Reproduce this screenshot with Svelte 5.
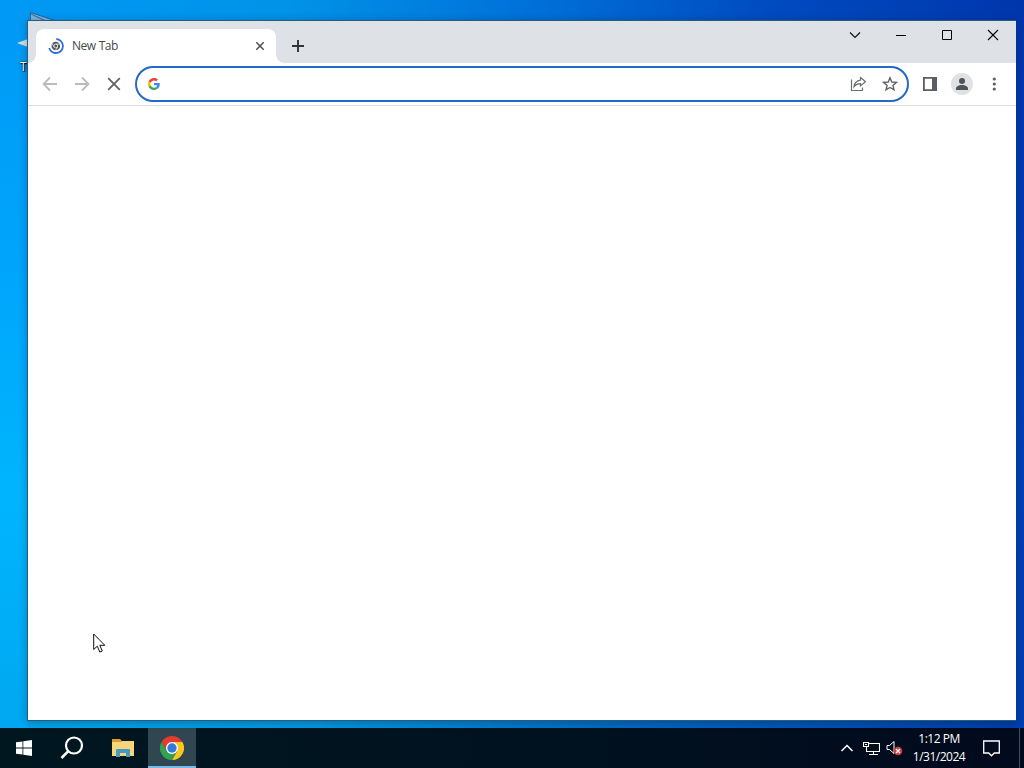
<script lang="ts">
  let tabTitle = $state('New Tab')
  let address = $state('')
  const time = '1:12 PM'
  const date = '1/31/2024'
</script>

<div class="desktop">
  <div class="shortcut" aria-hidden="true">
    <svg width="40" height="44" viewBox="0 0 40 44">
      <path d="M13 14V1.500l25 8.500H14" fill="#79b5e2" />
      <path d="M13.500 14V1.500L38 9.500M14 3l15 7" fill="none" stroke="#2c608c" stroke-width=".9" />
      <path d="M0 32l11-4v8z" fill="#d5dde2" />
    </svg>
    <span>Th</span>
  </div>

  <main class="window">
    <header class="titlebar">
      <div class="tab">
        <svg class="favicon" width="16" height="16" viewBox="0 0 16 16">
          <circle cx="7.8" cy="8" r="4.300" fill="#51555a" />
          <circle cx="7.8" cy="8" r="1.900" fill="#51555a" stroke="#fff" stroke-width=".8" />
          <path d="M7.8 6.100h4M6.100 9L4.200 5.700M9.500 9l-2 3.400" stroke="#fff" stroke-width=".7" />
          <path d="M8.300 1A7 7 0 1 1 1.200 10" fill="none" stroke="#2f6fdc" stroke-width="1.800" />
        </svg>
        <span class="tab-title">{tabTitle}</span>
        <button class="tab-close" aria-label="Close tab">
          <svg width="10" height="10" viewBox="0 0 10 10"><path d="M1.300 1.300l7.400 7.400M8.700 1.300L1.300 8.700" stroke="#4a4d51" stroke-width="1.500" /></svg>
        </button>
      </div>
      <button class="new-tab" aria-label="New tab">
        <svg width="12" height="12" viewBox="0 0 12 12"><path d="M6 0v12M0 6h12" stroke="#303337" stroke-width="1.900" /></svg>
      </button>
      <div class="controls">
        <button aria-label="Search tabs"><svg width="12" height="12" viewBox="0 0 12 12"><path d="M1 3.500l5 5 5-5" fill="none" stroke="#111" stroke-width="1.200" /></svg></button>
        <button aria-label="Minimize"><svg width="12" height="12" viewBox="0 0 12 12"><path d="M1 6.500h10" stroke="#000" /></svg></button>
        <button aria-label="Maximize"><svg width="12" height="12" viewBox="0 0 12 12"><path d="M1.500 1.500h9v9h-9z" fill="none" stroke="#000" /></svg></button>
        <button aria-label="Close"><svg width="12" height="12" viewBox="0 0 12 12"><path d="M1 1l10 10M11 1L1 11" stroke="#000" stroke-width="1.100" /></svg></button>
      </div>
    </header>

    <nav class="toolbar">
      <button aria-label="Back"><svg width="16" height="16" viewBox="0 0 16 16"><path d="M15 8H2M8 1.500L1.500 8 8 14.500" fill="none" stroke="#b9bbbe" stroke-width="1.800" /></svg></button>
      <button aria-label="Forward"><svg width="16" height="16" viewBox="0 0 16 16"><path d="M1 8h13M8 1.500L14.500 8 8 14.500" fill="none" stroke="#b9bbbe" stroke-width="1.800" /></svg></button>
      <button aria-label="Stop"><svg width="16" height="16" viewBox="0 0 16 16"><path d="M2.200 2.200l11.600 11.600M13.800 2.200L2.200 13.800" stroke="#5f6266" stroke-width="1.800" /></svg></button>
      <div class="omnibox">
        <svg width="12" height="12" viewBox="0 0 48 48">
          <path fill="#ea4335" d="M24 9.500c3.500 0 6.700 1.200 9.200 3.600l6.900-6.900C35.900 2.400 30.500 0 24 0 14.600 0 6.500 5.400 2.600 13.200l8 6.200C12.400 13.700 17.700 9.500 24 9.500z" />
          <path fill="#4285f4" d="M47 24.600c0-1.600-.2-3.100-.4-4.600H24v9h12.900c-.6 3-2.300 5.500-4.800 7.200l7.700 6C44.400 38 47 32 47 24.600z" />
          <path fill="#fbbc05" d="M10.500 28.600A14.500 14.500 0 0 1 10.500 19.400l-8-6.200a24 24 0 0 0 0 21.600z" />
          <path fill="#34a853" d="M24 48c6.500 0 11.900-2.100 15.900-5.800l-7.700-6c-2.200 1.500-4.900 2.300-8.200 2.300-6.300 0-11.600-4.200-13.500-9.900l-8 6.200C6.500 42.600 14.600 48 24 48z" />
        </svg>
        <input aria-label="Address" bind:value={address} />
        <svg width="16" height="16" viewBox="0 0 16 16" fill="none" stroke="#6c7074" stroke-width="1.200">
          <path d="M1.500 3.500v11h11v-3" />
          <path d="M10.500 1.500l5 4.200-5 4.300V7.600c-2.600 0-5 1-6.500 3 .4-3.800 3-6 6.500-6.500z" />
        </svg>
        <svg class="star" width="16" height="16" viewBox="0 0 16 16"><path d="M8 1.800l1.800 4.200 4.600.4-3.500 3 1.100 4.500-4-2.400-4 2.400 1.100-4.500-3.500-3L6.200 6z" fill="none" stroke="#5f6368" stroke-width="1.400" /></svg>
      </div>
      <button class="panel" aria-label="Side panel"><svg width="14" height="14" viewBox="0 0 14 14"><path d="M.9.9h12.200v12.200H.9z" fill="none" stroke="#5b5f63" stroke-width="1.800" /><path d="M9 0h5v14H9z" fill="#5b5f63" /></svg></button>
      <button class="avatar" aria-label="Profile"><svg width="22" height="22" viewBox="0 0 22 22"><circle cx="11" cy="11" r="11" fill="#dfe1e5" /><circle cx="11" cy="8" r="3" fill="#505459" /><path d="M5 17v-1.500c0-2.200 3-3.500 6-3.500s6 1.300 6 3.500V17z" fill="#505459" /></svg></button>
      <button class="more" aria-label="Menu"><svg width="4" height="14" viewBox="0 0 4 14" fill="#5b5f63"><circle cx="2.300" cy="2" r="1.600" /><circle cx="2.300" cy="7" r="1.600" /><circle cx="2.300" cy="12" r="1.600" /></svg></button>
    </nav>
    <section class="page"></section>
  </main>

  <footer class="taskbar">
    <button aria-label="Start"><svg width="16" height="16" viewBox="0 0 16 16" fill="#fff"><path d="M0 2.300l6.500-.9v6.100H0zM7.300 1.300L16 0v7.500H7.300zM0 8.400h6.500v6.200L0 13.700zM7.300 8.400H16V16l-8.700-1.200z" /></svg></button>
    <button aria-label="Search"><svg width="24" height="24" viewBox="0 0 24 24" fill="none" stroke="#fff" stroke-width="2.200"><circle cx="14" cy="9.500" r="8" /><path d="M8.300 15.200L1.500 22" stroke-width="2.600" /></svg></button>
    <button aria-label="File Explorer">
      <svg width="22" height="20" viewBox="0 0 22 20">
        <path d="M0 1h8l2 2h11v5H0z" fill="#dc9d2c" />
        <path d="M0 4h9l2-1h11v15H0z" fill="#f7d578" />
        <path d="M4 19v-7q0-1 1-1h12q1 0 1 1v7h-4v-4H8v4z" fill="#419bc8" />
      </svg>
    </button>
    <button class="active" aria-label="Chrome">
      <svg width="24" height="24" viewBox="0 0 24 24">
        <path d="M1.600 6A12 12 0 0 1 22.400 6H12L6.800 15z" fill="#e33b2e" />
        <path d="M22.400 6A12 12 0 0 1 12 24l5.200-9L12 6z" fill="#fbc71d" />
        <path d="M12 24A12 12 0 0 1 1.600 6l5.200 9h10.400z" fill="#31a350" />
        <circle cx="12" cy="12" r="6" fill="#fff" />
        <circle cx="12" cy="12" r="4.700" fill="#3479de" />
      </svg>
    </button>
    <div class="tray">
      <svg width="14" height="10" viewBox="0 0 14 10"><path d="M1.500 8L7 2.500 12.500 8" fill="none" stroke="#fff" stroke-width="1.500" /></svg>
      <svg width="17" height="15" viewBox="0 0 17 15" fill="none" stroke="#fff"><path d="M5.500 2.500h11v8H3.500v-4M10.500 10.500v3M6 13.500h9M.5 1.500h5v4h-5zM2 3.500h2M3.500 5.500v5" stroke-width="1.100" /></svg>
      <svg class="volume" width="17" height="16" viewBox="0 0 17 16"><path d="M1 5.500h2.500L8 1.500v12l-4.500-4H1z" fill="none" stroke="#fff" /><circle cx="12" cy="11" r="4.300" fill="#d43c3c" /><path d="M10 9l4 4M14 9l-4 4" stroke="#fff" stroke-width="1.200" /></svg>
      <div class="clock"><span>{time}</span><span>{date}</span></div>
      <svg class="notice" width="17" height="17" viewBox="0 0 17 17"><path d="M.7 1h15.600v12h-5L8.500 15.800 5.700 13h-5z" fill="none" stroke="#fff" stroke-width="1.300" /></svg>
    </div>
  </footer>

  <svg class="cursor" width="13" height="21" viewBox="0 0 13 21"><path d="M.7 1v15.500l3.600-3.300 2.500 5.900 2.500-1.100-2.500-5.700h5z" fill="#fff" stroke="#111" /></svg>
</div>

<style>
  :global(body) {
    margin: 0;
    overflow: hidden;
  }

  .desktop {
    position: relative;
    display: flex;
    flex-direction: column;
    width: 1024px;
    height: 768px;
    box-sizing: border-box;
    padding-top: 20px;
    font-family: 'Open Sans', 'Noto Sans', sans-serif;
    background:
      linear-gradient(180deg, #0099f5 0%, #00a5fb 35%, #00b5fd 65%, #00a5ee 100%) left / 28px 100% no-repeat,
      linear-gradient(180deg, #0036ac, #0040b5 60%, #003eae) right / 8px 100% no-repeat,
      linear-gradient(90deg, #0099f5 0%, #0093e8 28%, #006fd8 53%, #004bc0 75%, #0036ac 100%) top / 100% 22px no-repeat,
      linear-gradient(90deg, #00a5e8, #0097db 30%, #0069be 60%, #003ca5);
  }

  button {
    display: flex;
    align-items: center;
    justify-content: center;
    padding: 0;
    border: 0;
    background: none;
  }

  svg {
    display: block;
    flex-shrink: 0;
  }

  .shortcut {
    position: absolute;
    left: 17px;
    top: 11px;
    color: #fff;
    font-size: 12px;
    text-shadow: 1px 1px 1px #000, 0 0 2px #000;
  }

  .shortcut span {
    display: block;
    margin: 3px 0 0 3px;
  }

  .window {
    z-index: 1;
    display: flex;
    flex-direction: column;
    width: 988px;
    height: 699px;
    margin-left: 27px;
    border: 1px solid #285d78;
    border-right: 0;
    background: #fff;
    box-shadow: 0 1px 8px rgb(0 20 70 / 30%);
  }

  .titlebar {
    display: flex;
    height: 42px;
    background: #dee1e6;
  }

  .tab {
    position: relative;
    display: flex;
    align-items: center;
    width: 240px;
    height: 34px;
    margin: 8px 0 0 8px;
    box-sizing: border-box;
    padding: 0 10px 0 12px;
    border-radius: 8px 8px 0 0;
    background: #fff;
  }

  .tab::before,
  .tab::after {
    content: '';
    position: absolute;
    bottom: 0;
    width: 8px;
    height: 8px;
  }

  .tab::before {
    left: -8px;
    background: radial-gradient(circle at 0 0, transparent 7.5px, #fff 8px);
  }

  .tab::after {
    right: -8px;
    background: radial-gradient(circle at 100% 0, transparent 7.5px, #fff 8px);
  }

  .tab-title {
    flex: 1;
    margin: -1px 0 0 8px;
    font-size: 12px;
    letter-spacing: -0.5px;
    word-spacing: 0.5px;
    color: #45494d;
  }

  .tab-close {
    width: 12px;
    height: 16px;
  }

  .new-tab {
    width: 28px;
    height: 28px;
    margin: 11px 0 0 8px;
  }

  .controls {
    display: flex;
    height: 28px;
    margin-left: auto;
  }

  .controls button {
    width: 46px;
  }

  .toolbar {
    display: flex;
    align-items: center;
    height: 42px;
    padding-left: 6px;
    border-bottom: 1px solid #dadce0;
  }

  .toolbar > button {
    width: 32px;
    height: 32px;
  }

  .omnibox {
    display: flex;
    align-items: center;
    width: 774px;
    height: 36px;
    margin: 0 5px;
    box-sizing: border-box;
    padding: 0 9px 0 11px;
    border: 2px solid #2569c8;
    border-radius: 18px;
  }

  .omnibox input {
    flex: 1;
    min-width: 0;
    border: 0;
    outline: 0;
    font: 14px 'Open Sans', sans-serif;
  }

  .star {
    margin-left: 16px;
  }

  .page {
    flex: 1;
  }

  .taskbar {
    display: flex;
    height: 40px;
    margin-top: auto;
    background: linear-gradient(90deg, #001720, #00121f 50%, #020a1d);
  }

  .taskbar button {
    width: 48px;
    box-sizing: border-box;
  }

  .taskbar button:nth-child(3) {
    width: 52px;
    padding-left: 2px;
  }

  .taskbar .active {
    border-bottom: 2px solid #76b9ed;
    padding-top: 2px;
    background: #304650;
  }

  .tray {
    display: flex;
    align-items: center;
    width: 180px;
    margin: 0 4px 0 auto;
    border-right: 1px solid #465163;
    box-sizing: border-box;
  }

  .tray > svg:nth-child(2) {
    margin-left: 9px;
  }

  .volume {
    margin-left: 6px;
  }

  .clock {
    display: flex;
    flex-direction: column;
    align-items: center;
    width: 56px;
    margin-left: 8px;
    color: #fff;
    font-size: 12px;
    line-height: 18px;
    letter-spacing: -0.5px;
    white-space: nowrap;
  }

  .notice {
    margin-left: 16px;
  }

  .cursor {
    position: absolute;
    left: 93px;
    top: 633px;
    z-index: 2;
  }
</style>
